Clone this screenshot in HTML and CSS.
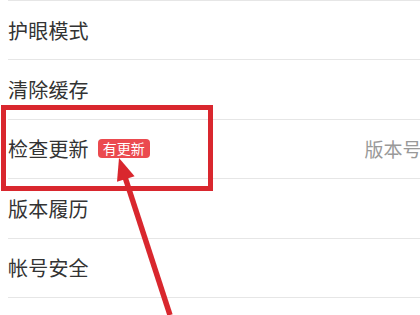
FILE: index.html
```html
<!DOCTYPE html>
<html lang="zh-CN">
  <head>
    <meta charset="UTF-8" />
    <meta name="viewport" content="width=device-width, initial-scale=1.0" />
    <title>设置</title>
    <link rel="stylesheet" href="styles.css">
  </head>
  <body>
    <div class="settings">
      <div class="row">
        <span class="label">护眼模式</span>
      </div>
      <div class="row">
        <span class="label">清除缓存</span>
        <span class="value value-cache">4.2MB</span>
      </div>
      <div class="row">
        <span class="label">检查更新</span>
        <span class="badge">有更新</span>
        <span class="value">版本号 8.6.0</span>
      </div>
      <div class="row">
        <span class="label">版本履历</span>
      </div>
      <div class="row">
        <span class="label">帐号安全</span>
      </div>
      <div class="row row-last"></div>
    </div>

    <svg class="markup" width="420" height="315" viewBox="0 0 420 315">
      <rect x="3.5" y="107.5" width="207" height="81" fill="none" stroke="#d9272e" stroke-width="5" />
      <line x1="170" y1="315" x2="125" y2="177" stroke="#d9272e" stroke-width="5.5" />
      <polygon points="119,158 134.6,176.2 117,181.8" fill="#d9272e" />
    </svg>
  </body>
</html>
```

FILE: styles.css
```css
body {
  margin: 0;
  background-color: #fff;
  font-family: "Noto Sans CJK SC", "Noto Sans", sans-serif;
  color: #333;
  overflow: hidden;
  width: 420px;
  height: 315px;
  position: relative;
}

.settings {
  margin-left: 8px;
  width: 460px;
}

.row {
  box-sizing: border-box;
  height: 59.4px;
  border-top: 1px solid #e6e6e6;
  display: flex;
  align-items: center;
}

.row-last {
  height: 18px;
}

.label {
  font-size: 20px;
  letter-spacing: 0.2px;
}

.badge {
  margin-left: 9px;
  background-color: #eb4a4f;
  color: #fff;
  font-size: 14px;
  line-height: 19px;
  height: 19px;
  padding: 0 5px;
  border-radius: 4px;
}

.value {
  margin-left: auto;
  font-size: 19px;
  color: #999;
  white-space: nowrap;
}

.value-cache {
  margin-right: -7px;
}

.markup {
  position: absolute;
  left: 0;
  top: 0;
}
```
